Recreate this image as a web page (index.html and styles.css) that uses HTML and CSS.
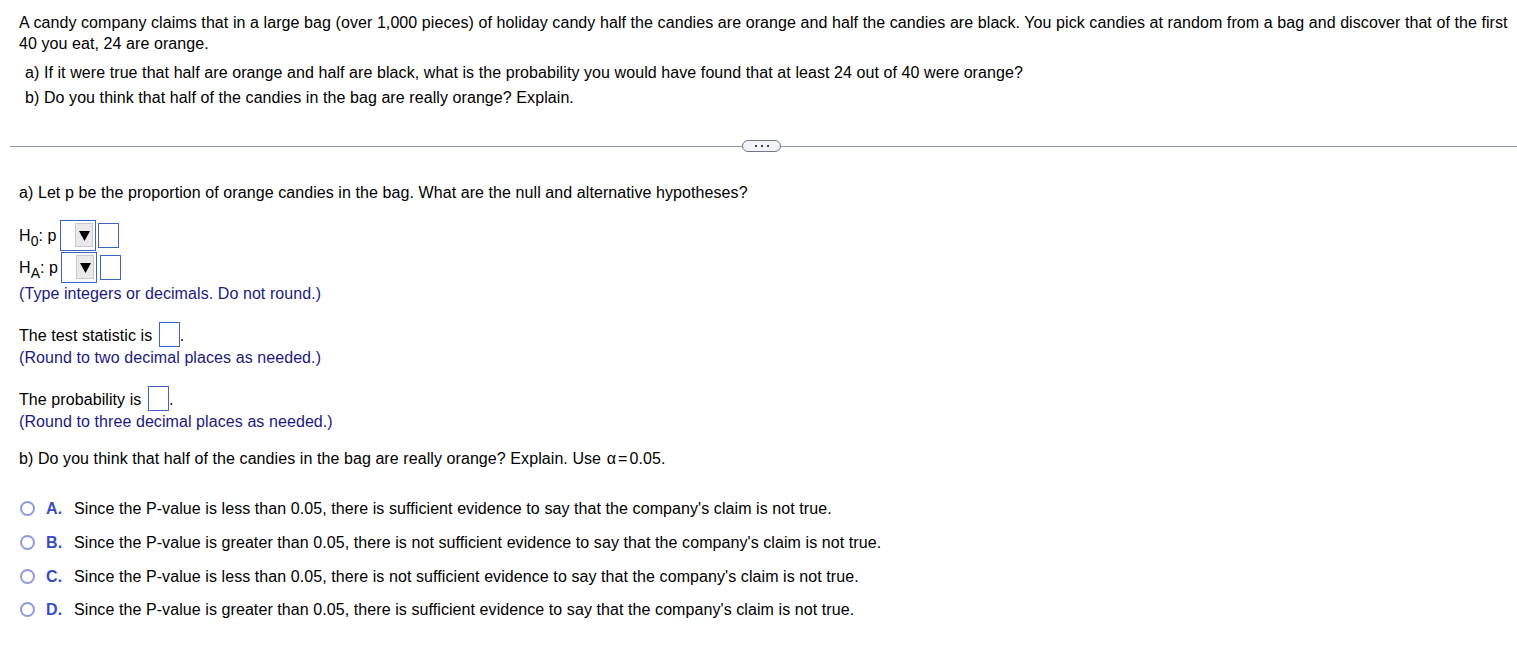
FILE: index.html
```html
<!DOCTYPE html>
<html>
<head>
<meta charset="utf-8">
<link rel="stylesheet" href="styles.css">
</head>
<body>
<div class="question">
  <p class="intro">A candy company claims that in a large bag (over 1,000 pieces) of holiday candy half the candies are orange and half the candies are black. You pick candies at random from a bag and discover that of the first 40 you eat, 24 are orange.</p>
  <div class="parts">
    <div class="part">a) If it were true that half are orange and half are black, what is the probability you would have found that at least 24 out of 40 were orange?</div>
    <div class="part">b) Do you think that half of the candies in the bag are really orange? Explain.</div>
  </div>
</div>
<div class="divider">
  <div class="line"></div>
  <div class="pill"><span></span><span></span><span></span></div>
  <div class="line"></div>
</div>
<div class="answer">
  <p class="prompt">a) Let p be the proportion of orange candies in the bag. What are the null and alternative hypotheses?</p>
  <div class="hyp">
    <div class="hrow"><span class="hlabel">H<sub>0</sub>: p</span><span class="select"><span class="btn"><svg width="11" height="11" viewBox="0 0 11 11"><path d="M0 1 H11 L5.5 11 Z" fill="#000"/></svg></span></span><span class="box"></span></div>
    <div class="hrow"><span class="hlabel">H<sub>A</sub>: p</span><span class="select"><span class="btn"><svg width="11" height="11" viewBox="0 0 11 11"><path d="M0 1 H11 L5.5 11 Z" fill="#000"/></svg></span></span><span class="box"></span></div>
    <div class="note">(Type integers or decimals. Do not round.)</div>
  </div>
  <div class="block">
    <div class="fill">The test statistic is <span class="box inl"></span>.</div>
    <div class="note">(Round to two decimal places as needed.)</div>
  </div>
  <div class="block">
    <div class="fill">The probability is <span class="box inl"></span>.</div>
    <div class="note">(Round to three decimal places as needed.)</div>
  </div>
  <p class="prompt b">b) Do you think that half of the candies in the bag are really orange? Explain. Use <span class="alpha">α</span>=<span class="num">0.05</span>.</p>
  <div class="choices">
    <div class="choice"><span class="radio"></span><span class="letter">A.</span><span>Since the P-value is less than 0.05, there is sufficient evidence to say that the company's claim is not true.</span></div>
    <div class="choice"><span class="radio"></span><span class="letter">B.</span><span>Since the P-value is greater than 0.05, there is not sufficient evidence to say that the company's claim is not true.</span></div>
    <div class="choice"><span class="radio"></span><span class="letter">C.</span><span>Since the P-value is less than 0.05, there is not sufficient evidence to say that the company's claim is not true.</span></div>
    <div class="choice"><span class="radio"></span><span class="letter">D.</span><span>Since the P-value is greater than 0.05, there is sufficient evidence to say that the company's claim is not true.</span></div>
  </div>
</div>
</body>
</html>
```
FILE: styles.css
```css
html, body {
  margin: 0;
  padding: 0;
  background: #fff;
}
body {
  font-family: "Liberation Sans", Arial, sans-serif;
  font-size: 16px;
  letter-spacing: 0.08px;
  color: #000;
  line-height: 21px;
}
p { margin: 0; }
.question {
  padding: 12px 0 0 19px;
}
.intro {
  max-width: 1496px;
}
.parts {
  padding: 6px 0 0 6px;
}
.part {
  line-height: 25px;
}
.divider {
  display: flex;
  align-items: center;
  margin: 30px 0 0 10px;
  height: 12px;
}
.line {
  height: 1px;
  background: #8d96a8;
}
.line:first-child { width: 732px; }
.line:last-child { flex: 1; }
.pill {
  width: 37px;
  height: 10px;
  border: 1px solid #6f7888;
  border-radius: 6px;
  background: #f1f3f6;
  display: flex;
  justify-content: center;
  align-items: center;
  gap: 4px;
}
.pill span {
  width: 2px;
  height: 2px;
  background: #3b4452;
}
.answer {
  padding: 30px 0 0 19px;
}
.hyp {
  margin-top: 16px;
}
.hrow {
  display: flex;
  align-items: center;
  height: 32px;
}
.hlabel {
  width: 41px;
}
.hrow sub {
  font-size: 14px;
  vertical-align: -5px;
  line-height: 0;
}
.select {
  width: 32px;
  height: 29px;
  border: 1px solid #3c63c6;
  display: flex;
  justify-content: flex-end;
  align-items: center;
  padding-right: 2px;
}
.hrow + .hrow .select { margin-left: 1px; }
.btn {
  width: 18px;
  height: 24px;
  background: #e9e9e9;
  border: 1px solid #c8c8c8;
  box-sizing: border-box;
  display: flex;
  align-items: center;
  justify-content: center;
}
.box {
  display: inline-block;
  width: 19px;
  height: 23px;
  border: 1px solid #3c63c6;
  margin-left: 2px;
}
.hrow + .hrow .box { margin-left: 3px; }
.box.inl {
  vertical-align: -6px;
  margin-left: 2px;
}
.note {
  color: #1a1a80;
}
.fill {
  height: 23px;
  line-height: 23px;
}
.fill + .note {
  margin-top: 2px;
}
.block {
  margin-top: 18px;
}
.block + .block {
  margin-top: 18px;
}
.prompt.b {
  margin-top: 16px;
}
.alpha {
  margin: 0 2px 0 1px;
}
.num {
  margin-left: 2px;
}
.choices {
  margin-top: 23px;
}
.choice {
  display: flex;
  align-items: center;
  height: 33.7px;
}
.radio {
  width: 11px;
  height: 11px;
  border: 2px solid #8b9be2;
  border-radius: 50%;
  margin-left: 1px;
}
.letter {
  color: #3a4cc4;
  font-weight: bold;
  margin-left: 11px;
  width: 28px;
}
```
